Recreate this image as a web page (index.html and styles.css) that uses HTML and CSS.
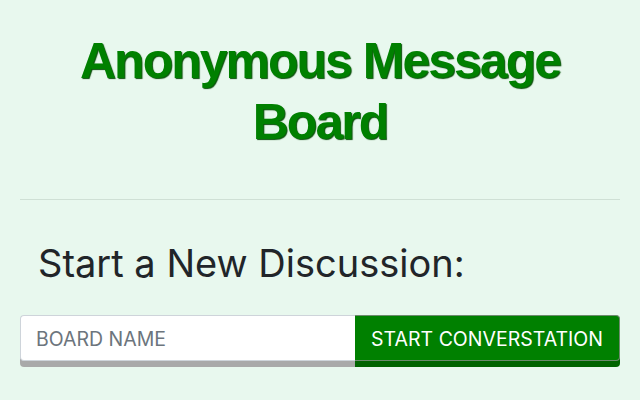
FILE: index.html
```html
<!DOCTYPE html>
<html>
<head>
<meta charset="utf-8">
<link rel="stylesheet" href="styles.css">
</head>
<body>
<div class="page">
  <h1 class="title">Anonymous Message Board</h1>
  <hr class="divider">
  <h2 class="subtitle">Start a New Discussion:</h2>
  <form class="group">
    <input class="field" type="text" placeholder="BOARD NAME">
    <button class="btn" type="button">START CONVERSTATION</button>
  </form>
</div>
</body>
</html>
```
FILE: styles.css
```css
html, body {
  margin: 0;
  padding: 0;
  background: #e8f8ee;
  height: 100%;
}
.page {
  padding: 0 20px;
  font-family: "Liberation Sans", Arial, sans-serif;
}
.title {
  margin: 0 auto;
  padding-top: 31px;
  width: 540px;
  text-align: center;
  font-size: 50px;
  line-height: 61px;
  font-weight: bold;
  color: #008000;
  letter-spacing: -2px;
  text-shadow: 1px 1px 1px #0a4f0a;
}
.divider {
  margin: 46px 0 0;
  border: 0;
  border-top: 1px solid #cfe0d5;
}
.subtitle {
  margin: 41px 0 0 18px;
  font-family: "Inter", "Liberation Sans", sans-serif;
  font-weight: 400;
  font-size: 38px;
  line-height: 44px;
  color: #212529;
}
.group {
  display: flex;
  margin-top: 30px;
  height: 46px;
  border-radius: 4px;
}
.field {
  flex: 1 1 0;
  min-width: 0;
  box-sizing: border-box;
  height: 46px;
  margin: 0;
  padding: 2px 15px 0;
  border: 1px solid #ced4da;
  border-right: 0;
  border-radius: 4px 0 0 4px;
  background: #fff;
  box-shadow: 0 6px 0 #a9a9a9;
  font-family: "Inter", "Liberation Sans", sans-serif;
  font-size: 19.5px;
  color: #495057;
  outline: none;
}
.field::placeholder {
  color: #6c757d;
}
.btn {
  flex: 0 0 265px;
  box-sizing: border-box;
  height: 46px;
  margin: 0;
  padding: 2px 0 0;
  border: 1px solid #6d8a6d;
  border-left: 0;
  border-radius: 0 4px 4px 0;
  background: #008000;
  box-shadow: 0 6px 0 #006400;
  color: #fff;
  font-family: "Inter", "Liberation Sans", sans-serif;
  font-size: 19.5px;
}
```
